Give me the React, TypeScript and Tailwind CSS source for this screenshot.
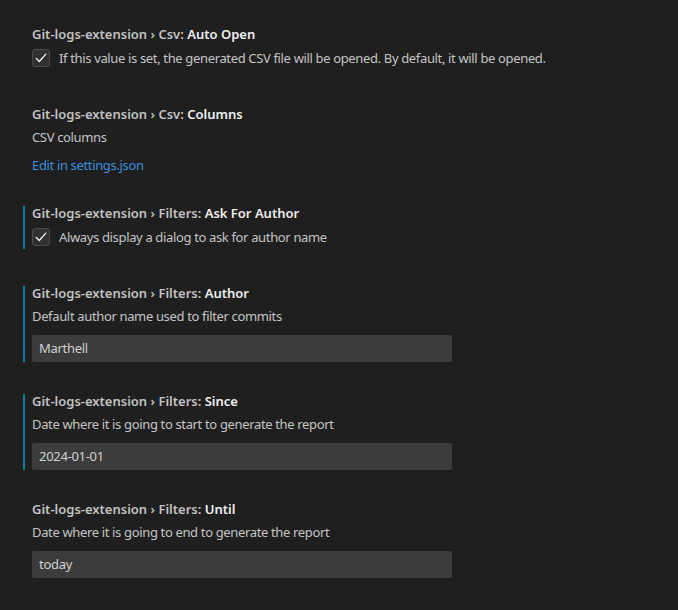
import React from "react";

const FONT = "font-['Segoe_UI','Noto_Sans','Open_Sans',sans-serif]";

function Title({ category, name }: { category: string; name: string }) {
  return (
    <div className="h-[18px] leading-[18px] text-[13px] font-semibold whitespace-nowrap">
      <span className="text-[#c2c2c2]">Git-logs-extension › {category}: </span>
      <span className="text-[#f0f0f0]">{name}</span>
    </div>
  );
}

function Check({ label }: { label: string }) {
  return (
    <div className="mt-[6px] flex items-center gap-[9px] h-[18px]">
      <div className="w-[18px] h-[18px] rounded-[3px] bg-[#313131] border border-[#4a4a4a] flex items-center justify-center">
        <svg width="14" height="14" viewBox="0 0 16 16" fill="none">
          <path d="M2.5 8.5l3.5 3.5 7.5-8.5" stroke="#ffffff" strokeWidth="1.4" strokeLinecap="round" strokeLinejoin="round" />
        </svg>
      </div>
      <span className="text-[13px] leading-[18px] tracking-[-0.35px] text-[#c4c4c4] whitespace-nowrap">{label}</span>
    </div>
  );
}

function Desc({ text }: { text: string }) {
  return <div className="mt-[5px] text-[13px] leading-[18px] tracking-[-0.35px] text-[#c4c4c4]">{text}</div>;
}

function Field({ value }: { value: string }) {
  return (
    <div className="mt-[10px] w-[420px] h-[27px] rounded-[2px] bg-[#3c3c3c] px-[7px] flex items-center text-[13px] tracking-[-0.3px] text-[#d0d0d0]">
      {value}
    </div>
  );
}

function Item({
  modified,
  children,
  gap,
  barBottom = "bottom-0",
}: {
  modified?: boolean;
  children: React.ReactNode;
  gap: string;
  barBottom?: string;
}) {
  return (
    <div className={`pl-[32px] ${gap}`}>
      <div className="relative">
        {modified && <div className={`absolute left-[-9px] top-[2px] ${barBottom} w-[2px] bg-[#0c7d9d]`} />}
        {children}
      </div>
    </div>
  );
}

export default function App() {
  return (
    <div className={`w-[678px] h-[610px] bg-[#1f1f1f] pt-[25px] overflow-hidden antialiased ${FONT}`}>
      <Item gap="pb-[38px]">
        <Title category="Csv" name="Auto Open" />
        <Check label="If this value is set, the generated CSV file will be opened. By default, it will be opened." />
      </Item>
      <Item gap="pb-[30px]">
        <Title category="Csv" name="Columns" />
        <Desc text="CSV columns" />
        <div className="mt-[10px] text-[13px] leading-[18px] tracking-[-0.35px] text-[#3b8fde]">Edit in settings.json</div>
      </Item>
      <Item modified gap="pb-[38px]" barBottom="bottom-[-3px]">
        <Title category="Filters" name="Ask For Author" />
        <Check label="Always display a dialog to ask for author name" />
      </Item>
      <Item modified gap="pb-[30px]">
        <Title category="Filters" name="Author" />
        <Desc text="Default author name used to filter commits" />
        <Field value="Marthell" />
      </Item>
      <Item modified gap="pb-[30px]">
        <Title category="Filters" name="Since" />
        <Desc text="Date where it is going to start to generate the report" />
        <Field value="2024-01-01" />
      </Item>
      <Item gap="pb-[30px]">
        <Title category="Filters" name="Until" />
        <Desc text="Date where it is going to end to generate the report" />
        <Field value="today" />
      </Item>
    </div>
  );
}
